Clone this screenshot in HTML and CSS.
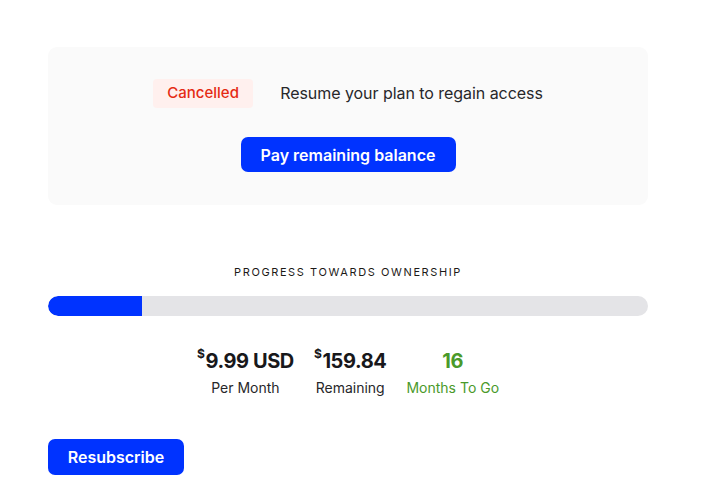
FILE: index.html
```html
<!DOCTYPE html>
<html>
<head>
<meta charset="utf-8">
<link rel="stylesheet" href="styles.css">
</head>
<body>
<div class="page">
  <section class="card">
    <div class="status-row">
      <span class="badge">Cancelled</span>
      <span class="status-text">Resume your plan to regain access</span>
    </div>
    <button class="btn btn-pay">Pay remaining balance</button>
  </section>

  <section class="progress">
    <h2 class="progress-title">Progress towards ownership</h2>
    <div class="bar"><div class="bar-fill" style="width: 15.7%"></div></div>
    <div class="stats">
      <div class="stat">
        <div class="stat-value"><sup>$</sup>9.99 USD</div>
        <div class="stat-label">Per Month</div>
      </div>
      <div class="stat">
        <div class="stat-value"><sup>$</sup>159.84</div>
        <div class="stat-label">Remaining</div>
      </div>
      <div class="stat stat-green">
        <div class="stat-value">16</div>
        <div class="stat-label">Months To Go</div>
      </div>
    </div>
  </section>

  <button class="btn btn-resub">Resubscribe</button>
</div>
</body>
</html>
```

FILE: styles.css
```css
* { box-sizing: border-box; }
html, body { margin: 0; padding: 0; background: #ffffff; }
body {
  font-family: Inter, "Noto Sans", sans-serif;
  color: #18181b;
}
.page {
  width: 696px;
  padding: 47px 48px 0 48px;
  display: flex;
  flex-direction: column;
  align-items: flex-start;
}
.card {
  width: 600px;
  height: 158px;
  background: #fafafa;
  border-radius: 9px;
  display: flex;
  flex-direction: column;
  align-items: center;
  padding-top: 32px;
}
.status-row {
  display: flex;
  align-items: center;
  gap: 27px;
}
.badge {
  display: inline-flex;
  align-items: center;
  justify-content: center;
  width: 100px;
  height: 29px;
  background: #fff0ee;
  color: #e52b14;
  border-radius: 4px;
  font-size: 15px;
  font-weight: 500;
  padding-bottom: 2px;
}
.status-text {
  font-size: 16px;
  color: #27272a;
  letter-spacing: -0.05px;
  padding-bottom: 1px;
}
.btn {
  border: none;
  background: #0033ff;
  color: #ffffff;
  font-family: Inter, "Noto Sans", sans-serif;
  font-size: 16px;
  font-weight: 600;
  border-radius: 7px;
  cursor: pointer;
  padding: 0;
}
.btn-pay {
  margin-top: 29px;
  width: 215px;
  height: 35px;
}
.progress {
  width: 600px;
  margin-top: 59px;
  display: flex;
  flex-direction: column;
  align-items: center;
}
.progress-title {
  margin: 0;
  font-size: 11px;
  font-weight: 400;
  text-transform: uppercase;
  letter-spacing: 1.6px;
  color: #1c1917;
  line-height: 16px;
}
.bar {
  width: 600px;
  height: 20px;
  margin-top: 16px;
  background: #e4e4e7;
  border-radius: 10px;
  overflow: hidden;
}
.bar-fill {
  height: 100%;
  background: #0033ff;
  border-radius: 10px 0 0 10px;
}
.stats {
  display: flex;
  gap: 20px;
  margin-top: 32px;
}
.stat {
  display: flex;
  flex-direction: column;
  align-items: center;
}
.stat-value {
  font-size: 20px;
  font-weight: 700;
  line-height: 26px;
  color: #18181b;
  letter-spacing: -0.4px;
}
.stat-value sup {
  font-size: 12px;
  vertical-align: top;
  line-height: 12px;
  margin-right: 1px;
}
.stat-label {
  font-size: 14px;
  line-height: 20px;
  margin-top: 4px;
  color: #27272a;
}
.stat-green .stat-value,
.stat-green .stat-label {
  color: #4a9a2a;
}
.btn-resub {
  margin-top: 41px;
  width: 136px;
  height: 36px;
}
```
